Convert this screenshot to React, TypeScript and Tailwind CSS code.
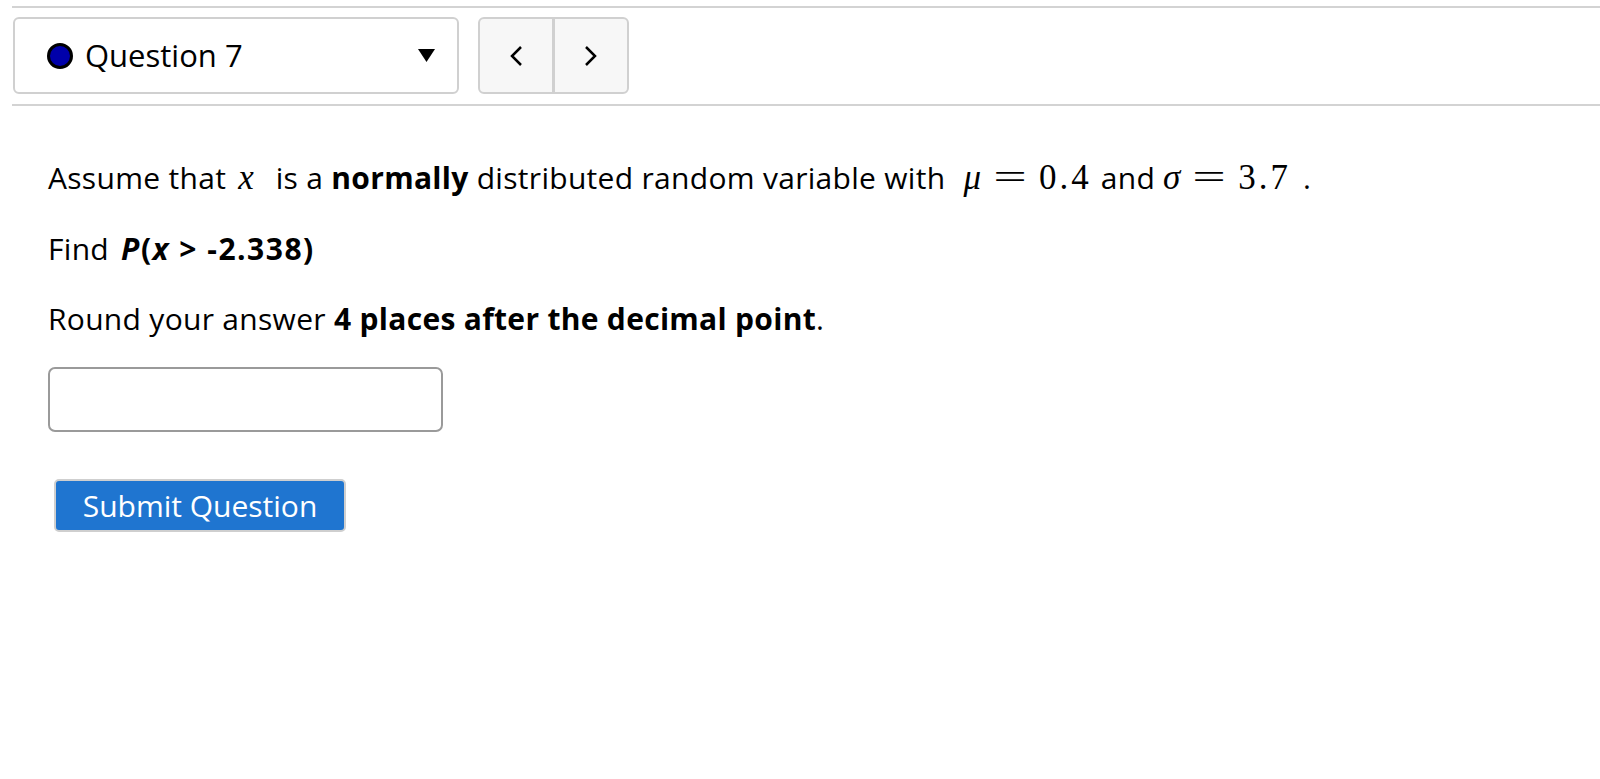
import { useState } from "react";

const Math = ({ children, className = "" }: { children: React.ReactNode; className?: string }) => (
  <span className={`font-['Liberation_Serif',serif] text-[35px] tracking-normal ${className}`}>{children}</span>
);

const Eq = () => (
  <span className="inline-block w-[28px] mx-[15px] text-center scale-x-[1.7]">=</span>
);

const Num = ({ children }: { children: React.ReactNode }) => (
  <span className="tracking-[3px]">{children}</span>
);

const App = () => {
  const [answer, setAnswer] = useState("");

  return (
    <div className="min-h-screen bg-white text-black font-['Open_Sans',sans-serif]">
      <div className="pt-[6px] pl-[12px]">
        <div className="h-[2px] bg-[#d3d3d3]" />

        <div className="mt-[9px] flex items-stretch gap-[19px] pl-[1px]">
          <div className="w-[446px] h-[77px] flex items-center justify-between rounded-[6px] border-2 border-[#d0d0d0] bg-white pl-[32px] pr-[22px]">
            <div className="flex items-center gap-[12px]">
              <span className="w-[26px] h-[26px] rounded-full bg-[#0000aa] border-[3px] border-black" />
              <span className="text-[31px] leading-none">Question 7</span>
            </div>
            <svg width="17" height="13" viewBox="0 0 17 13">
              <path d="M0 0 L17 0 L8.5 13 Z" fill="black" />
            </svg>
          </div>

          <div className="w-[151px] h-[77px] flex rounded-[6px] border-2 border-[#d0d0d0] bg-[#f7f7f7] overflow-hidden">
            <button className="flex-1 flex items-center justify-center">
              <svg width="14" height="22" viewBox="0 0 14 22">
                <path d="M12 2 L3 11 L12 20" fill="none" stroke="black" strokeWidth="2.5" />
              </svg>
            </button>
            <div className="w-[3px] bg-[#d0d0d0]" />
            <button className="flex-1 flex items-center justify-center">
              <svg width="14" height="22" viewBox="0 0 14 22">
                <path d="M2 2 L11 11 L2 20" fill="none" stroke="black" strokeWidth="2.5" />
              </svg>
            </button>
          </div>
        </div>

        <div className="mt-[10px] h-[2px] bg-[#d3d3d3]" />
      </div>

      <div className="pl-[48px] pt-[52px] text-[30px] leading-[40px] tracking-[0.3px]">
        <p>
          Assume that
          <Math className="ml-[12px] mr-[22px]">
            <i>x</i>
          </Math>
          is a <b>normally</b> distributed random variable with
          <Math className="ml-[18px] mr-[9px]">
            <i>μ</i>
            <Eq />
            <Num>0.4</Num>
          </Math>
          and
          <Math className="ml-[8px] mr-[12px]">
            <i>σ</i>
            <Eq />
            <Num>3.7</Num>
          </Math>
          .
        </p>

        <p className="mt-[31px]">
          Find{" "}
          <b className="ml-[4px] tracking-[1.5px]">
            <i>P</i>(<i>x</i> &gt; -2.338)
          </b>
        </p>

        <p className="mt-[30px]">
          Round your answer <b>4 places after the decimal point</b>.
        </p>

        <input
          value={answer}
          onChange={(e) => setAnswer(e.target.value)}
          className="mt-[28px] block w-[395px] h-[65px] rounded-[7px] border-2 border-[#9a9a9a] bg-white px-3 outline-none"
        />

        <button className="mt-[47px] ml-[6px] block w-[292px] h-[53px] rounded-[5px] border-2 border-[#cfcfcf] bg-[#1f75d0] text-white text-[30px] leading-none tracking-normal">
          Submit Question
        </button>
      </div>
    </div>
  );
};

export default App;
